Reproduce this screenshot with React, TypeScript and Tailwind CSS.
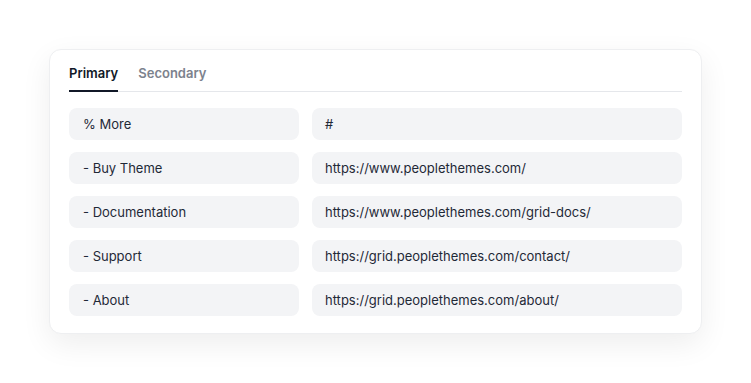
import React from "react";

const rows = [
  ["% More", "#"],
  ["- Buy Theme", "https://www.peoplethemes.com/"],
  ["- Documentation", "https://www.peoplethemes.com/grid-docs/"],
  ["- Support", "https://grid.peoplethemes.com/contact/"],
  ["- About", "https://grid.peoplethemes.com/about/"],
];

export default function App() {
  return (
    <div className="min-h-[383px] w-full bg-white pt-[49px]" style={{ fontFamily: "Inter, 'Noto Sans', sans-serif" }}>
      <div className="ml-[49px] w-[653px] rounded-xl border border-[#eeeff1] bg-white px-[19px] pb-[17px] shadow-[0_10px_30px_rgba(0,0,0,0.07)]">
        <div className="flex gap-[20px] border-b border-[#e5e7eb] pt-[13px]">
          <div className="-mb-px border-b-2 border-[#111827] pb-[7px] text-[13px] leading-[20px] font-semibold text-[#111827]">Primary</div>
          <div className="-mb-px border-b-2 border-transparent pb-[7px] text-[13px] leading-[20px] font-semibold text-[#7c828d]">Secondary</div>
        </div>
        <div className="mt-4 grid grid-cols-[230px_1fr] gap-x-[13px] gap-y-3">
          {rows.map(([a, b]) => (
            <React.Fragment key={a}>
              <div className="flex h-8 items-center rounded-lg bg-[#f3f4f6] pl-[14px] pt-px text-[13px] text-[#1f2937]">{a}</div>
              <div className="flex h-8 items-center rounded-lg bg-[#f3f4f6] pl-[13px] pt-px text-[13px] text-[#1f2937]">{b}</div>
            </React.Fragment>
          ))}
        </div>
      </div>
    </div>
  );
}
